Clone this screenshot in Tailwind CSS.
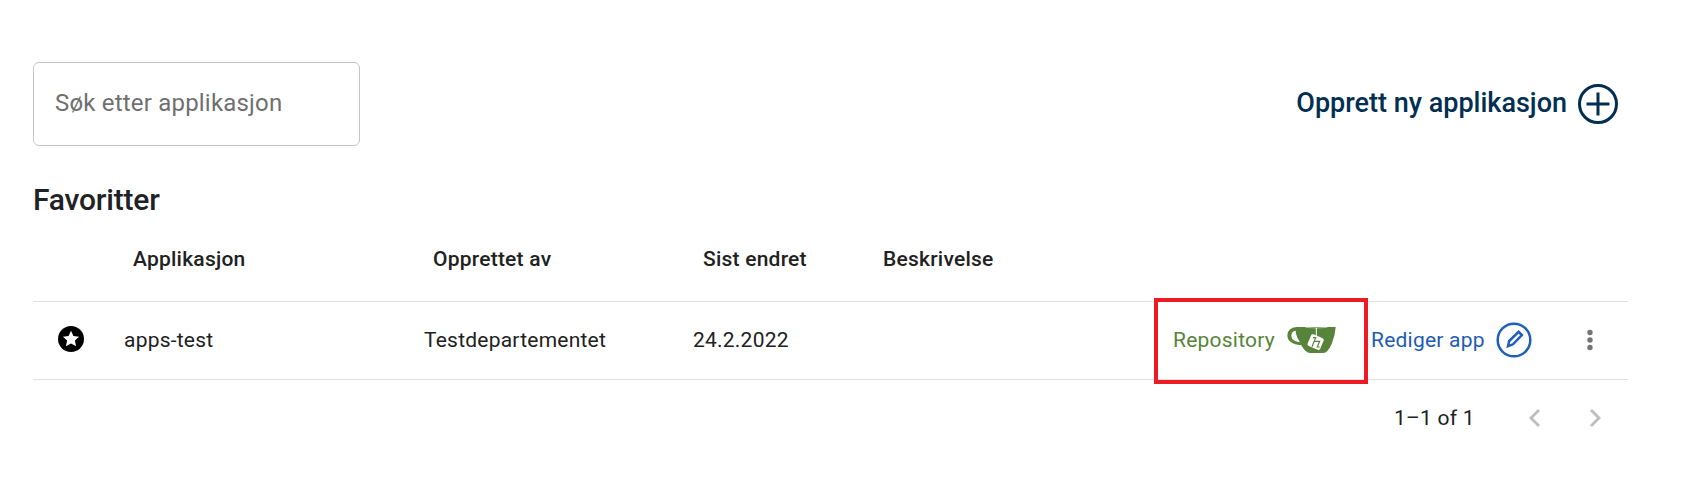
<!DOCTYPE html>
<html lang="nb">
<head>
<meta charset="utf-8">
<title>Applikasjoner</title>
<script src="https://cdn.jsdelivr.net/npm/@tailwindcss/browser@4"></script>
</head>
<body class="bg-white font-['Roboto',sans-serif] text-[#212121]">
<main class="ml-[33px] w-[1595px] pt-[62px]">
  <div class="flex h-[84px] items-center justify-between">
    <label class="flex h-[84px] w-[327px] items-center rounded-[6px] border border-[#c4c4c4] pl-[21px] text-2xl tracking-[0.2px] text-[#6f6f6f]"><span class="whitespace-nowrap pb-[3px]">Søk etter applikasjon</span></label>
    <button class="mr-[9px] flex items-center gap-[10px] pb-px text-[27px] font-medium leading-9 text-[#022f51]">
      <span class="whitespace-nowrap pb-[2px]">Opprett ny applikasjon</span>
      <svg class="size-[42px]" viewBox="0 0 42 42" fill="none" stroke="#022f51" stroke-width="3"><circle cx="21" cy="21" r="18.5"/><path d="M21 9.5v23M9.5 21h23"/></svg>
    </button>
  </div>
  <h2 class="mt-[32px] h-11 whitespace-nowrap text-[30px] font-medium leading-[44px] tracking-[-0.2px] text-[#1e2226]">Favoritter</h2>
  <div class="grid h-[80px] grid-cols-[90px_300px_270px_180px_1fr] items-center border-b border-[#e0e0e0] pb-[3px] text-[21px] font-medium tracking-[0.225px]">
    <span></span>
    <span class="pl-[10px]">Applikasjon</span>
    <span class="pl-[10px]">Opprettet av</span>
    <span class="pl-[10px]">Sist endret</span>
    <span class="pl-[10px]">Beskrivelse</span>
  </div>
  <div class="relative grid h-[78px] grid-cols-[90px_300px_270px_460px_1fr] items-center border-b border-[#e0e0e0] text-[21px] tracking-[0.225px]">
    <svg class="mb-[3px] ml-[25px] size-[26px]" viewBox="0 0 26 26"><circle cx="13" cy="13" r="13"/><path fill="#fff" d="M13 4.8l2.4 5.3 5.7.6-4.2 3.9 1.2 5.7L13 17.4l-5.1 2.9 1.2-5.7-4.2-3.9 5.7-.6z"/></svg>
    <span class="pl-px">apps-test</span>
    <span class="pl-px">Testdepartementet</span>
    <span>24.2.2022</span>
    <div class="flex items-center">
      <a class="ml-5 flex w-[198px] items-center gap-[10px] text-[#57843a]"><span class="w-[103px] whitespace-nowrap">Repository</span>
        <svg class="mb-[2px] h-7 w-[51px] shrink-0" viewBox="438 122 153 84"><path fill="#57843a" fill-rule="evenodd" d="M470 125H587Q586 150 575 176Q563 203 550 203H510Q497 203 484 180Q442 176 442 150Q443 127 470 125ZM467 136Q454 137 454 153Q456 168 480 171Q468 153 467 136Z"/><path d="M496 126Q530 130 562 126" fill="none" stroke="#fff" stroke-width="1.5"/><path d="M529 127V153" stroke="#fff" stroke-width="3"/><rect x="506" y="151" width="41" height="38" rx="6" fill="#fff" transform="rotate(23 526 171)"/><path d="M519 157h8L516 184M522 168h17l-7 17h7" fill="none" stroke="#57843a" stroke-width="3.5"/></svg>
      </a>
      <a class="flex items-center gap-[12px] text-[#1e5cb3]"><span class="w-[113px] whitespace-nowrap">Rediger app</span>
        <svg class="mb-[2px] size-[36px] shrink-0" viewBox="0 0 36 36" fill="none" stroke="#1e5fb8" stroke-width="2.5"><circle cx="18" cy="18" r="16.3"/><path d="M12 24.2l1.2-5.2 9.4-9.2 3.3 3.3-8.9 9.2z"/></svg>
      </a>
      <svg class="mb-[2px] ml-[55px] h-[22px] w-[6px] shrink-0" viewBox="0 0 6 22" fill="#757575"><circle cx="3" cy="3.5" r="2.7"/><circle cx="3" cy="11" r="2.7"/><circle cx="3" cy="18.5" r="2.7"/></svg>
    </div>
    <div class="absolute -top-[4px] left-[1121px] h-[86px] w-[214px] border-4 border-[#ed1c24]"></div>
  </div>
  <div class="flex h-[78px] items-center pl-[1361px] text-[21px] tracking-[0.225px]">
    <span class="w-[135px] whitespace-nowrap">1–1 of 1</span>
    <svg class="mb-[2px] h-[18px] w-[11px] shrink-0" viewBox="0 0 11 18" fill="none" stroke="#bdbdbd" stroke-width="2.8"><path d="M10 1L2 9l8 8"/></svg>
    <svg class="mb-[2px] ml-[50px] h-[18px] w-[11px] shrink-0" viewBox="0 0 11 18" fill="none" stroke="#bdbdbd" stroke-width="2.8"><path d="M1 1l8 8-8 8"/></svg>
  </div>
</main>
</body>
</html>
